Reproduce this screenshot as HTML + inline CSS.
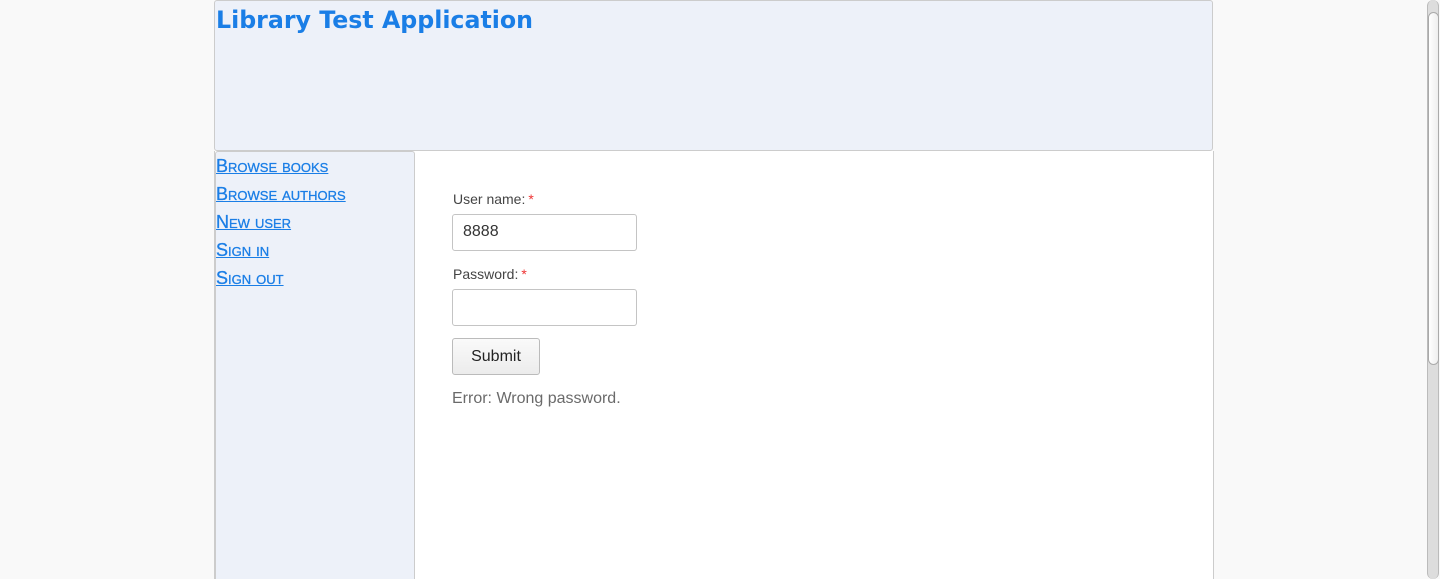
<!DOCTYPE html>
<html><head><style>
html,body{margin:0;height:579px;overflow:hidden}
body{background:#f9f9f9;width:1440px;position:relative;font-family:"Liberation Sans","DejaVu Sans",sans-serif}
#hdr{position:absolute;left:214px;top:0;width:997px;height:149px;background:#edf1f9;border:1px solid #ccc;border-radius:3px}
#hdr h1{margin:0;position:absolute;left:1px;top:5px;font:bold 23.7px "DejaVu Sans",sans-serif;color:#1a7ee6}
#main{position:absolute;left:214px;top:151px;width:998px;height:428px;background:#fff;border-left:1px solid #ccc;border-right:1px solid #ccc}
#side{position:absolute;left:215px;top:151px;width:198px;height:428px;background:#edf1f9;border:1px solid #ccc;border-bottom:0;border-radius:3px 3px 0 0}
#side a{position:absolute;left:0;color:#1a7ee6;font-size:18px;font-variant:small-caps;text-decoration:underline;white-space:nowrap;-webkit-text-stroke:0.3px #1a7ee6}
.lbl{position:absolute;left:453px;font-size:14px;color:#444}
.lbl span{color:#e33;margin-left:3px}
.inp{position:absolute;left:452px;width:185px;height:37px;border:1px solid #c4c4c4;border-radius:3px;background:#fff;box-sizing:border-box;font-size:16px;color:#333;padding:8px 10px}
#btn{position:absolute;left:452px;top:338px;width:88px;height:37px;box-sizing:border-box;border:1px solid #bbb;border-radius:3px;background:linear-gradient(#fafafa,#ececec);font-size:16px;color:#222;text-align:center;line-height:35px}
#err{position:absolute;left:452px;top:390px;font-size:16px;color:#6a6a6a}
#sb{position:absolute;left:1427px;top:0;width:12px;height:579px;background:#ddd;border-left:1px solid #bbb;border-right:1px solid #bbb;box-sizing:border-box;border-radius:6px}
#th{position:absolute;left:1428px;top:12px;width:11px;height:353px;background:linear-gradient(90deg,#fff,#eee);border:1px solid #aaa;border-radius:6px;box-sizing:border-box}
</style></head><body>
<div id="hdr"><h1>Library Test Application</h1></div>
<div id="main"></div>
<div id="side">
<a style="top:4px">Browse books</a>
<a style="top:32px">Browse authors</a>
<a style="top:60px">New user</a>
<a style="top:88px">Sign in</a>
<a style="top:116px">Sign out</a>
</div>
<div class="lbl" style="top:191px">User name:<span>*</span></div>
<div class="inp" style="top:214px">8888</div>
<div class="lbl" style="top:266px">Password:<span>*</span></div>
<div class="inp" style="top:289px"></div>
<div id="btn">Submit</div>
<div id="err">Error: Wrong password.</div>
<div id="sb"></div><div id="th"></div>
</body></html>
